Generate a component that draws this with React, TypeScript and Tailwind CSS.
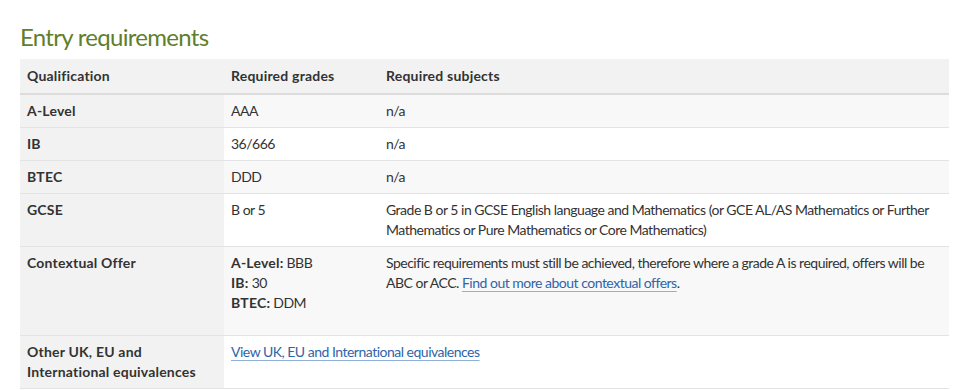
export default function App() {
  const link = "text-[#2f64a8] underline decoration-[#8fb0d8] underline-offset-[3px]";
  const rows = [
    { q: "A-Level", g: <>AAA</>, s: <>n/a</> },
    { q: "IB", g: <>36/666</>, s: <>n/a</> },
    { q: "BTEC", g: <>DDD</>, s: <>n/a</> },
    {
      q: "GCSE",
      g: <>B or 5</>,
      s: (
        <>
          Grade B or 5 in GCSE English language and Mathematics (or GCE AL/AS Mathematics or Further
          Mathematics or Pure Mathematics or Core Mathematics)
        </>
      ),
    },
    {
      q: "Contextual Offer",
      g: (
        <div className="pb-[16px]">
          <div><b className="tracking-[0.2px]">A-Level:</b> BBB</div>
          <div><b className="tracking-[0.2px]">IB:</b> 30</div>
          <div><b className="tracking-[0.2px]">BTEC:</b> DDM</div>
        </div>
      ),
      s: (
        <>
          Specific requirements must still be achieved, therefore where a grade A is required, offers will be
          ABC or ACC.{" "}
          <a href="#" className={link}>
            Find out more about contextual offers
          </a>
          .
        </>
      ),
    },
    {
      q: "Other UK, EU and International equivalences",
      g: (
        <a href="#" className={`${link} whitespace-nowrap`}>
          View UK, EU and International equivalences
        </a>
      ),
      s: null,
    },
  ];

  return (
    <div className="bg-white h-[390px] overflow-hidden text-[#333] font-['Lato',sans-serif]">
      <h2 className="pl-5 pt-[22px] pb-[8px] text-[24px] leading-[29px] tracking-[-0.7px] text-[#5f7f2c]">
        Entry requirements
      </h2>
      <table className="ml-5 w-[929px] table-fixed border-collapse text-[14px] leading-[20px] tracking-[-0.5px]">
        <thead>
          <tr className="bg-[#f2f2f2] border-b-2 border-[#dcdcdc]">
            <th className="w-[204px] text-left font-bold tracking-[0.2px] px-[7px] py-[7px]">Qualification</th>
            <th className="w-[155px] text-left font-bold tracking-[0.2px] px-[7px] py-[7px]">Required grades</th>
            <th className="text-left font-bold tracking-[0.2px] px-[7px] py-[7px]">Required subjects</th>
          </tr>
        </thead>
        <tbody>
          {rows.map((r, i) => (
            <tr key={r.q} className={`border-b border-[#e3e3e3] ${i % 2 === 0 ? "bg-[#f8f8f8]" : "bg-white"}`}>
              <td className="bg-[#f2f2f2] font-bold tracking-[0.2px] align-top px-[7px] py-[6px]">{r.q}</td>
              <td className="align-top px-[7px] py-[6px] overflow-visible">{r.g}</td>
              <td className="align-top px-[7px] py-[6px]">{r.s}</td>
            </tr>
          ))}
        </tbody>
      </table>
    </div>
  );
}
